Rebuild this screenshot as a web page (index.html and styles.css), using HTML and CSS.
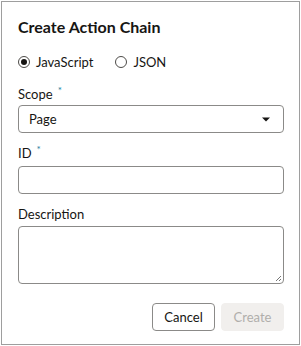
FILE: index.html
```html
<!DOCTYPE html>
<html lang="en">
<head>
<meta charset="UTF-8">
<title>Create Action Chain</title>
<link rel="stylesheet" href="styles.css">
</head>
<body>
<div class="dialog">
  <h2 class="title">Create Action Chain</h2>
  <div class="radios">
    <label class="radio"><span class="dot checked"></span>JavaScript</label>
    <label class="radio"><span class="dot"></span>JSON</label>
  </div>

  <div class="field first">
    <label class="label">Scope<span class="req">*</span></label>
    <div class="select">
      <span>Page</span>
      <svg width="8" height="5" viewBox="0 0 8 5"><path d="M0 0.5h8L4 4.5z" fill="#161513"/></svg>
    </div>
  </div>

  <div class="field">
    <label class="label">ID<span class="req">*</span></label>
    <div class="input"></div>
  </div>

  <div class="field">
    <label class="label">Description</label>
    <div class="input area">
      <svg class="grip" width="7" height="7" viewBox="0 0 7 7"><path d="M6 1L1 6M6 4L4 6" stroke="#777" stroke-width="1"/></svg>
    </div>
  </div>

  <div class="footer">
    <button class="btn" type="button">Cancel</button>
    <button class="btn disabled" type="button">Create</button>
  </div>
</div>
</body>
</html>
```

FILE: styles.css
```css
body {
  margin: 0;
  font-family: Lato, sans-serif;
  color: #161513;
  background: #fff;
}
.dialog {
  width: 299px;
  height: 344px;
  border: 1px solid #9e9e9e;
  box-sizing: border-box;
  margin: 1px 0 0 1px;
  padding: 15px 15px 0 16px;
}
.title {
  font-size: 16px;
  font-weight: 700;
  margin: 0;
  line-height: 20px;
}
.radios {
  display: flex;
  gap: 22px;
  margin-top: 15px;
  font-size: 13px;
  line-height: 20px;
}
.radio {
  display: flex;
  align-items: center;
  gap: 6px;
}
.dot {
  width: 12px;
  height: 12px;
  border: 1px solid #4d4b48;
  border-radius: 50%;
  box-sizing: border-box;
  position: relative;
}
.dot.checked::after {
  content: "";
  position: absolute;
  left: 2px;
  top: 2px;
  width: 6px;
  height: 6px;
  border-radius: 50%;
  background: #161513;
}
.field {
  margin-top: 12px;
}
.field.first {
  margin-top: 14px;
}
.label {
  display: block;
  font-size: 13px;
  line-height: 16px;
  margin-bottom: 4px;
}
.first .label {
  margin-bottom: 2px;
}
.req {
  color: #227e9e;
  font-size: 10px;
  position: relative;
  top: -5px;
  margin-left: 5px;
}
.select, .input {
  height: 28px;
  border: 1px solid #8b8a88;
  border-radius: 4px;
  box-sizing: border-box;
}
.select {
  display: flex;
  align-items: center;
  justify-content: space-between;
  padding: 0 13px 0 10px;
  font-size: 13px;
}
.input.area {
  height: 58px;
  position: relative;
}
.grip {
  position: absolute;
  right: 1px;
  bottom: 1px;
}
.footer {
  display: flex;
  justify-content: flex-end;
  gap: 6px;
  margin-top: 19px;
}
.btn {
  width: 63px;
  height: 28px;
  padding: 0;
  font-family: Lato, sans-serif;
  font-size: 13px;
  color: #161513;
  background: #fff;
  border: 1px solid #8b8a88;
  border-radius: 4px;
}
.btn.disabled {
  background: #f1efed;
  border-color: #f1efed;
  color: #b0aeab;
}
```
